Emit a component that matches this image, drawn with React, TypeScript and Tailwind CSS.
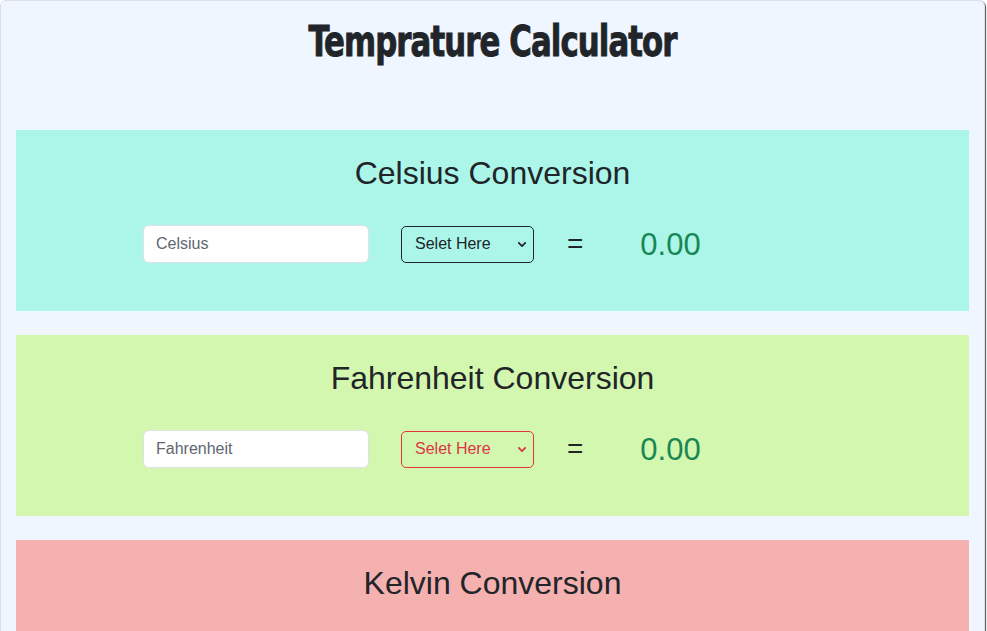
import React, { useState } from 'react';

interface Scale {
  name: string;
  placeholder: string;
  bg: string;
  selectTone: string;
  chevron: string;
}

const scales: Scale[] = [
  { name: 'Celsius', placeholder: 'Celsius', bg: 'bg-[#abf6e9]', selectTone: 'border-[#212529] text-[#212529]', chevron: 'text-[#212529]' },
  { name: 'Fahrenheit', placeholder: 'Fahrenheit', bg: 'bg-[#d3f7ae]', selectTone: 'border-[#e4343f] text-[#dc3545]', chevron: 'text-[#dc3545]' },
  { name: 'Kelvin', placeholder: 'Kelvin', bg: 'bg-[#f5b0b0]', selectTone: 'border-[#212529] text-[#212529]', chevron: 'text-[#212529]' },
];

function convert(value: string, from: string, to: string): string {
  const v = parseFloat(value);
  if (isNaN(v) || !to) return '0.00';
  let c = v;
  if (from === 'Fahrenheit') c = ((v - 32) * 5) / 9;
  if (from === 'Kelvin') c = v - 273.15;
  let out = c;
  if (to === 'Fahrenheit') out = (c * 9) / 5 + 32;
  if (to === 'Kelvin') out = c + 273.15;
  return out.toFixed(2);
}

function ConversionCard({ scale }: { scale: Scale }) {
  const [value, setValue] = useState('');
  const [target, setTarget] = useState('');
  const options = scales.filter((s) => s.name !== scale.name);

  return (
    <section className={`${scale.bg} pt-[24px] pb-[48px]`}>
      <h2 className="text-center text-[32px] leading-[38px] text-[#212529]">{scale.name} Conversion</h2>
      <div className="mt-[33px] flex items-center pl-[127px]">
        <input
          type="text"
          value={value}
          onChange={(e) => setValue(e.target.value)}
          placeholder={scale.placeholder}
          className="h-[38px] w-[226px] rounded-[6px] border border-[#dee2e6] bg-white px-3 text-[16px] text-[#212529] placeholder:text-[#5f6670] outline-none"
        />
        <div className="relative ml-[32px]">
          <select
            value={target}
            onChange={(e) => setTarget(e.target.value)}
            className={`h-[37px] w-[133px] appearance-none rounded-[5px] border bg-transparent pl-[13px] pr-6 text-[16px] outline-none ${scale.selectTone}`}
          >
            <option value="">Selet Here</option>
            {options.map((o) => (
              <option key={o.name} value={o.name}>
                {o.name}
              </option>
            ))}
          </select>
          <svg
            viewBox="0 0 10 6"
            className={`pointer-events-none absolute right-[8px] top-[16px] h-[5px] w-[8px] ${scale.chevron}`}
          >
            <path d="M1 1l4 4 4-4" fill="none" stroke="currentColor" strokeWidth="2.2" strokeLinecap="round" strokeLinejoin="round" />
          </svg>
        </div>
        <span className="ml-[33px] text-[28px] leading-none text-[#212529]">=</span>
        <span className="ml-[57px] text-[31px] leading-none text-[#198754]">{convert(value, scale.name, target)}</span>
      </div>
    </section>
  );
}

export default function App() {
  return (
    <div className="min-h-screen bg-white font-['Liberation_Sans',Arial,sans-serif]">
      <div className="mr-[2px] rounded-[6px] border border-[#dde1e6] bg-[#eff6ff] px-[15px] pb-6 shadow-[1px_1px_1px_rgba(0,0,0,0.7)]">
        <h1 className="pt-[16px] pb-[65px] text-center font-['Impact','DejaVu_Sans',sans-serif] font-stretch-condensed text-[38px] font-bold leading-[48px] tracking-[-1px] text-[#212529]">
          <span className="inline-block scale-x-[0.9] scale-y-[1.12] [-webkit-text-stroke:0.8px_#212529]">Temprature Calculator</span>
        </h1>
        <div className="flex flex-col gap-6">
          {scales.map((s) => (
            <ConversionCard key={s.name} scale={s} />
          ))}
        </div>
      </div>
    </div>
  );
}
